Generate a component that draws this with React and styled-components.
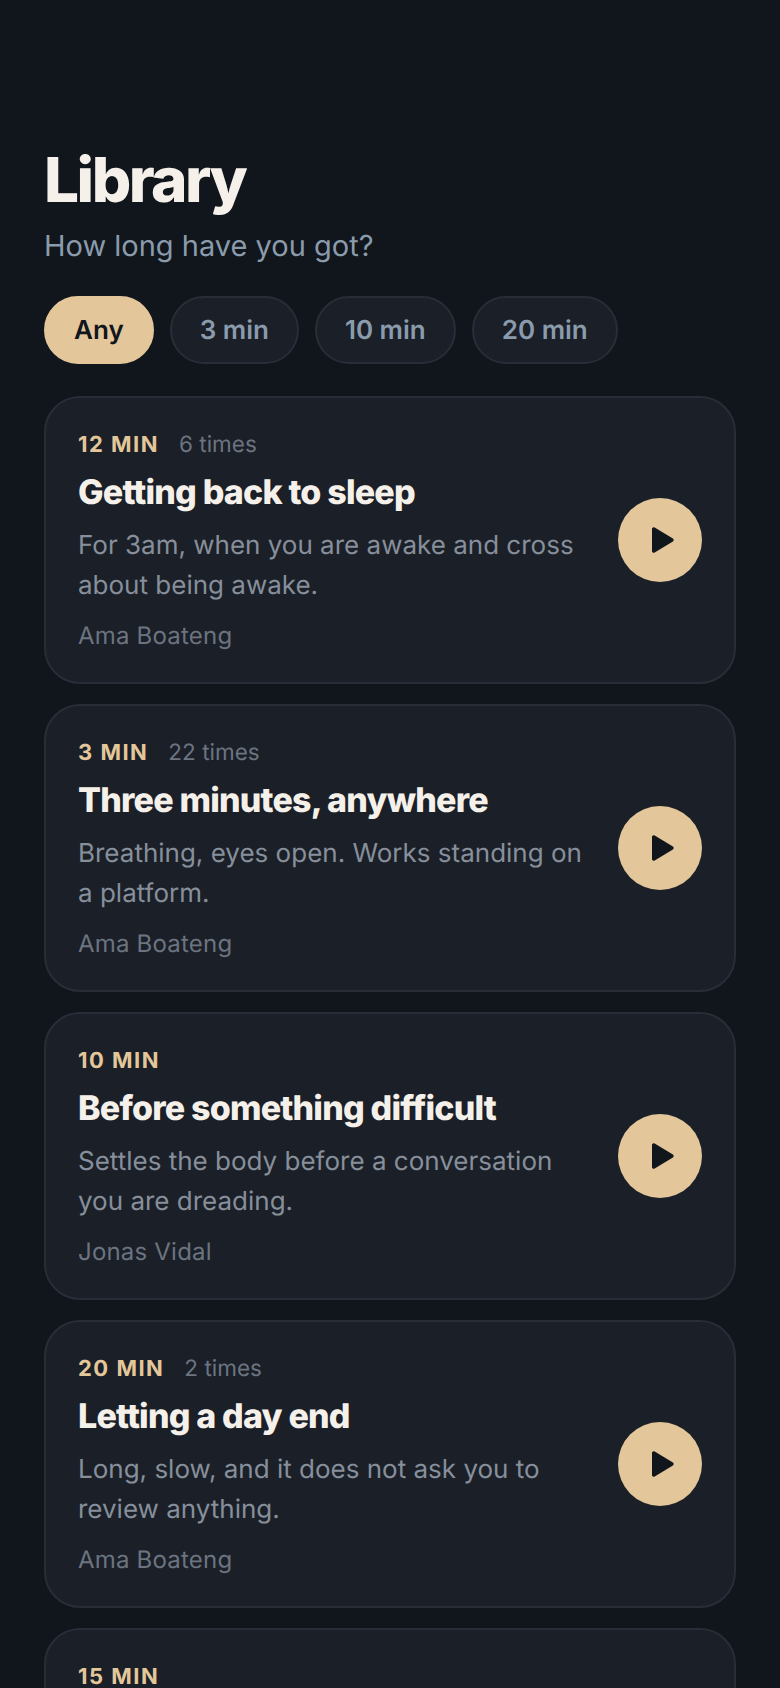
import React from 'react'
import styled, { createGlobalStyle } from 'styled-components'

const GlobalStyle = createGlobalStyle`
  html, body {
    margin: 0;
    padding: 0;
    background: #11151c;
    overflow: hidden;
  }
  * { box-sizing: border-box; }
`

const Screen = styled.div`
  width: 780px;
  height: 1688px;
  overflow: hidden;
  padding: 145px 44px 0;
  background: #11151c;
  font-family: Inter, "Liberation Sans", sans-serif;
  text-rendering: geometricPrecision;
`

const Title = styled.h1`
  margin: 0;
  font-size: 62px;
  line-height: 70px;
  font-weight: 800;
  letter-spacing: -2.48px;
  color: #f5f1ea;
`

const Subtitle = styled.p`
  margin: 11px 0 0;
  font-size: 29px;
  line-height: 40px;
  color: #8a9bac;
`

const Chips = styled.div`
  display: flex;
  gap: 16px;
  margin-top: 30px;
`

const Chip = styled.button`
  height: 68px;
  padding: 0 28px;
  border-radius: 34px;
  border: 2px solid ${p => (p.$active ? '#e3c79a' : '#282d37')};
  background: ${p => (p.$active ? '#e3c79a' : '#1b1f27')};
  color: ${p => (p.$active ? '#11151c' : '#8a9bac')};
  font-family: inherit;
  font-size: 26px;
  font-weight: 600;
  text-rendering: geometricPrecision;
`

const List = styled.div`
  display: flex;
  flex-direction: column;
  gap: 20px;
  margin-top: 32px;
`

const Card = styled.article`
  display: flex;
  align-items: center;
  gap: 24px;
  height: 288px;
  flex-shrink: 0;
  padding: 31px 32px;
  border: 2px solid #282d37;
  border-radius: 36px;
  background: #1b1f27;
`

const Body = styled.div`
  flex: 1;
  min-width: 0;
  align-self: flex-start;
`

const Meta = styled.div`
  display: flex;
  align-items: baseline;
  gap: 20px;
`

const Duration = styled.span`
  font-size: 22px;
  line-height: 32px;
  font-weight: 700;
  letter-spacing: 1.5px;
  color: #e3c79a;
`

const Plays = styled.span`
  font-size: 22.5px;
  line-height: 32px;
  color: #6b7480;
`

const CardTitle = styled.h2`
  margin: 10px 0 0;
  font-size: 34px;
  line-height: 44px;
  font-weight: 800;
  letter-spacing: -0.8px;
  color: #f5f1ea;
`

const Description = styled.p`
  margin: 11px 0 0;
  font-size: 26px;
  line-height: 40px;
  color: #868f9b;
`

const Author = styled.div`
  margin-top: 13px;
  font-size: 24px;
  line-height: 34px;
  letter-spacing: 0.2px;
  color: #6b7480;
`

const PlayButton = styled.button`
  flex-shrink: 0;
  display: flex;
  align-items: center;
  justify-content: center;
  width: 84px;
  height: 84px;
  padding: 0;
  border: 0;
  border-radius: 50%;
  background: #e3c79a;
`

const PlayIcon = () => (
  <svg width="36" height="36" viewBox="0 0 36 36" fill="#11151c">
    <path d="M10 7c0-1.5 1.5-2.3 2.7-1.6l18.2 11.2c1 .6 1 2.2 0 2.8l-18.2 11.2c-1.2.7-2.7-.1-2.7-1.6z" />
  </svg>
)

const filters = ['Any', '3 min', '10 min', '20 min']

const sessions = [
  { min: '12 MIN', plays: '6 times', title: 'Getting back to sleep', text: 'For 3am, when you are awake and cross about being awake.', by: 'Ama Boateng' },
  { min: '3 MIN', plays: '22 times', title: 'Three minutes, anywhere', text: 'Breathing, eyes open. Works standing on a platform.', by: 'Ama Boateng' },
  { min: '10 MIN', title: 'Before something difficult', text: 'Settles the body before a conversation you are dreading.', by: 'Jonas Vidal' },
  { min: '20 MIN', plays: '2 times', title: 'Letting a day end', text: 'Long, slow, and it does not ask you to review anything.', by: 'Ama Boateng' },
  { min: '15 MIN' },
]

export default function App() {
  return (
    <Screen>
      <GlobalStyle />
      <Title>Library</Title>
      <Subtitle>How long have you got?</Subtitle>
      <Chips>
        {filters.map((f, i) => (
          <Chip key={f} $active={i === 0}>{f}</Chip>
        ))}
      </Chips>
      <List>
        {sessions.map(s => (
          <Card key={s.min}>
            <Body>
              <Meta>
                <Duration>{s.min}</Duration>
                {s.plays && <Plays>{s.plays}</Plays>}
              </Meta>
              {s.title && <CardTitle>{s.title}</CardTitle>}
              {s.text && <Description>{s.text}</Description>}
              {s.by && <Author>{s.by}</Author>}
            </Body>
            <PlayButton aria-label="Play"><PlayIcon /></PlayButton>
          </Card>
        ))}
      </List>
    </Screen>
  )
}
